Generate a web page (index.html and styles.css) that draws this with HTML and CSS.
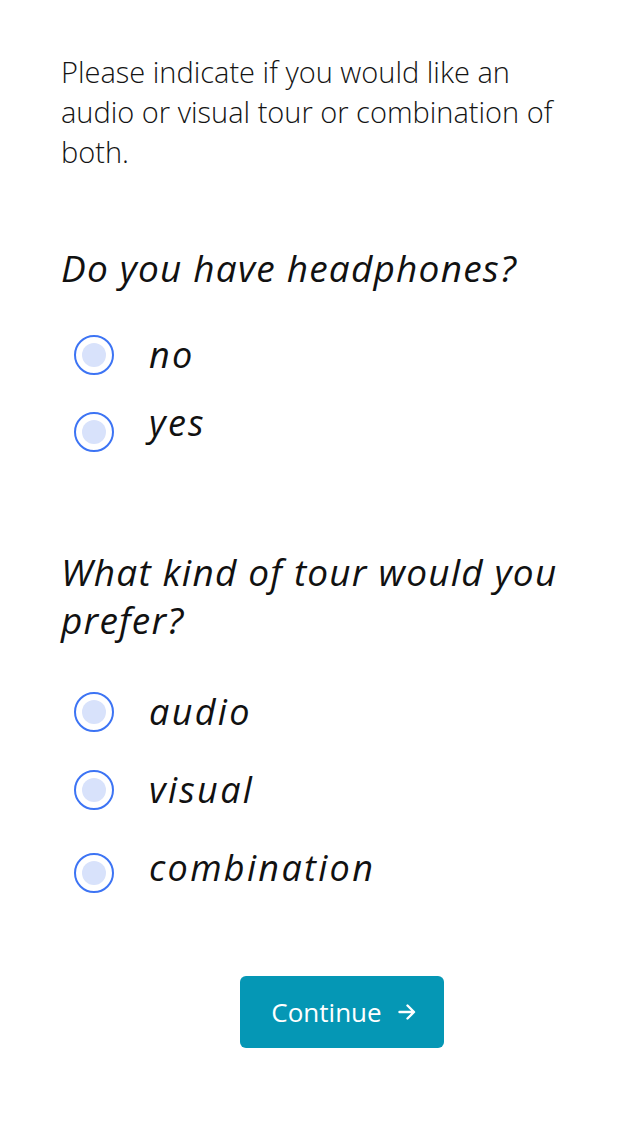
FILE: index.html
```html
<!DOCTYPE html>
<html lang="en">
<head>
<meta charset="utf-8">
<title>Tour preference</title>
<link rel="stylesheet" href="styles.css">
</head>
<body>
<main class="page">
  <p class="intro">Please indicate if you would like an audio or visual tour or combination of both.</p>

  <section class="question q1">
    <h2 class="q-title">Do you have headphones?</h2>
    <div class="options">
      <label class="option"><span class="radio"></span><span class="opt-label">no</span></label>
      <label class="option"><span class="radio"></span><span class="opt-label raised">yes</span></label>
    </div>
  </section>

  <section class="question q2">
    <h2 class="q-title">What kind of tour would you prefer?</h2>
    <div class="options">
      <label class="option"><span class="radio"></span><span class="opt-label">audio</span></label>
      <label class="option"><span class="radio"></span><span class="opt-label">visual</span></label>
      <label class="option spaced"><span class="radio"></span><span class="opt-label raised-sm">combination</span></label>
    </div>
  </section>

  <div class="actions">
    <button class="continue" type="button">Continue
      <svg class="arrow" width="20" height="20" viewBox="0 0 20 20" aria-hidden="true"><path d="M2.5 10h14M10.5 3.5L17 10l-6.5 6.5" fill="none" stroke="#fff" stroke-width="2.4" stroke-linecap="round" stroke-linejoin="round"/></svg>
    </button>
  </div>
</main>
</body>
</html>
```

FILE: styles.css
```css
html, body {
  margin: 0;
  padding: 0;
  background: #ffffff;
}
body {
  font-family: "Open Sans", "Noto Sans", sans-serif;
  color: #111111;
}
.page {
  padding: 52px 60px 0 61px;
  display: flex;
  flex-direction: column;
}
.intro {
  margin: 0;
  font-size: 29px;
  font-weight: 300;
  line-height: 40px;
  max-width: 510px;
  color: #141414;
}
.question {
  display: flex;
  flex-direction: column;
}
.q1 { margin-top: 72px; }
.q2 { margin-top: 96px; }
.q-title {
  margin: 0;
  font-size: 37px;
  font-style: italic;
  font-weight: 400;
  line-height: 48px;
  letter-spacing: 1.2px;
}
.options {
  display: flex;
  flex-direction: column;
  gap: 37px;
  margin-top: 43px;
  padding-left: 13px;
}
.q2 .options {
  margin-top: 48px;
  gap: 38px;
}
.option {
  display: flex;
  align-items: center;
  gap: 35px;
  height: 40px;
}
.option.spaced { margin-top: 5px; }
.radio {
  box-sizing: border-box;
  width: 40px;
  height: 40px;
  border-radius: 50%;
  border: 2px solid #3d74f4;
  background: #ffffff;
  display: flex;
  align-items: center;
  justify-content: center;
  flex: none;
}
.radio::after {
  content: "";
  width: 24px;
  height: 24px;
  border-radius: 50%;
  background: #d8e2fb;
}
.opt-label {
  font-size: 36px;
  font-style: italic;
  letter-spacing: 2.3px;
  line-height: 40px;
}
.opt-label.raised { margin-bottom: 18px; }
.opt-label.raised-sm { margin-bottom: 10px; }
.actions {
  display: flex;
  justify-content: center;
  margin-top: 83px;
  padding-left: 43px;
}
.continue {
  width: 204px;
  height: 72px;
  border: none;
  border-radius: 6px;
  background: #0597b5;
  color: #ffffff;
  font-family: "Open Sans", "Noto Sans", sans-serif;
  font-size: 26px;
  font-weight: 400;
  display: flex;
  align-items: center;
  justify-content: center;
  gap: 15px;
  padding: 0 0 0 4px;
}
.arrow { flex: none; }
```
